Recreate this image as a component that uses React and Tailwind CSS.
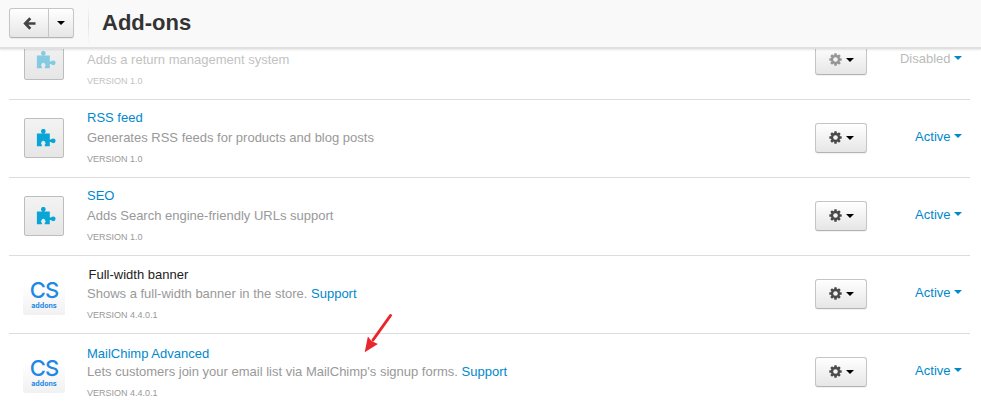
const BTN =
  'flex items-center justify-center border border-[#c5c5c5] border-b-[#b3b3b3] bg-linear-to-b from-white to-[#e6e6e6] shadow-[0_1px_1px_rgba(0,0,0,0.06)]';

function Caret({ className }) {
  return (
    <svg className={className} width="8" height="4" viewBox="0 0 8 4">
      <path d="M0 0h8L4 4z" fill="currentColor" />
    </svg>
  );
}

function Gear() {
  return (
    <svg className="-mt-px block" width="13" height="13" viewBox="-6.5 -6.5 13 13" fill="#4a4a4a">
      {[0, 45, 90, 135].map((a) => (
        <rect key={a} x="-1.3" y="-6.2" width="2.6" height="12.4" rx="0.4" transform={`rotate(${a})`} />
      ))}
      <circle r="4.7" />
      <circle r="2.3" fill="#f4f4f4" />
    </svg>
  );
}

function Puzzle() {
  return (
    <div className="flex h-10 w-10 rounded-xs border border-[#bdbdbd] bg-linear-to-b from-[#f3f3f3] to-[#e6e6e6] pt-[10px] pl-[11px]">
      <svg width="20" height="18" viewBox="0 0 20 18" fill="#08a5d6">
        <circle cx="7.300" cy="2.200" r="2.300" />
        <path d="M6 3.500h2.600v1.300H6zM13 10.500h3v2.600h-3z" />
        <circle cx="17.200" cy="11.800" r="2.400" />
        <path d="M0.900 4.500h12.900v12.800H8.700V15.900a2.200 2.200 0 1 0-2.800 0v1.400H0.900z" />
      </svg>
    </div>
  );
}

function CsLogo() {
  return (
    <div className="-mt-px -ml-px flex h-[42px] w-[42px] flex-col items-center rounded-xs bg-linear-to-b from-white from-30% to-[#f1f1f1] text-[#1e88e5]">
      <div className="mt-[7px] h-[20px] font-['Inter',sans-serif] text-[22px] leading-[20px] font-medium tracking-[-1px]">CS</div>
      <div className="mt-[2px] h-[8px] font-['Inter',sans-serif] text-[7px] leading-[8px] font-bold">addons</div>
    </div>
  );
}

const ADDONS = [
  { text: 'Adds a return management system', version: '1.0', disabled: true, title: 'h-[28px]' },
  { name: 'RSS feed', text: 'Generates RSS feeds for products and blog posts', version: '1.0', title: 'pt-[8px] h-[28px] text-[#0088cc]' },
  { name: 'SEO', text: 'Adds Search engine-friendly URLs support', version: '1.0', title: 'pt-[8px] h-[28px] text-[#0088cc]' },
  { name: 'Full-width banner', text: 'Shows a full-width banner in the store.', version: '4.4.0.1', cs: true, title: 'pt-[9px] h-[28px] pl-[1.5px] text-[#222]' },
  { name: 'MailChimp Advanced', text: "Lets customers join your email list via MailChimp's signup forms.", version: '4.4.0.1', cs: true, title: 'pt-[10px] h-[28px] text-[#0088cc]' },
];

function Row({ addon }) {
  return (
    <li className="flex h-[78px] shrink-0 border-b border-[#ddd]">
      <div className={`ml-[15px] w-[63px] pt-[18px] ${addon.disabled ? '[&_svg]:opacity-45' : ''}`}>
        {addon.cs ? <CsLogo /> : <Puzzle />}
      </div>
      <div className={`flex-1 ${addon.disabled ? 'opacity-60' : ''}`}>
        <div className={`leading-5 ${addon.title}`}>{addon.name}</div>
        <div className="leading-5 text-[#999]">
          {addon.text}
          {addon.cs && <span className="text-[#0088cc]"> Support</span>}
        </div>
        <div className="mt-px text-[9px] leading-5 text-[#999]">VERSION {addon.version}</div>
      </div>
      <div className="w-[62px] pt-[23px]">
        <div className={`${BTN} h-[30px] w-[52px] gap-1 rounded-[3px]`}>
          <span className={addon.disabled ? 'opacity-55' : ''}>
            <Gear />
          </span>
          <Caret className="text-black" />
        </div>
      </div>
      <div className="flex w-[93px] justify-end gap-[3.5px] pt-[27px] pr-2 leading-5 text-[#0088cc]">
        <span className={addon.disabled ? 'text-[#bbb]' : ''}>{addon.disabled ? 'Disabled' : 'Active'}</span>
        <Caret className="mt-[7px]" />
      </div>
    </li>
  );
}

export default function App() {
  return (
    <div className="relative flex h-[409px] w-[981px] flex-col overflow-hidden bg-white font-['Liberation_Sans',Arial,sans-serif] text-[13px]">
      <header className="z-10 flex h-[47px] shrink-0 items-start bg-[#f9f9f9] pt-2 pl-[9px] shadow-[0_2px_0_#e0e0e0,0_3px_2px_rgba(0,0,0,0.1)]">
        <div className={`${BTN} h-[30px] w-10 rounded-l-[3px]`}>
          <svg width="13" height="13" viewBox="0 0 13 13" fill="none" stroke="#444" strokeWidth="2.7">
            <path d="M7.300 1.200 2.200 6.500l5.100 5.300M2.500 6.500h10" />
          </svg>
        </div>
        <div className={`${BTN} -ml-px h-[30px] w-[26px] rounded-r-[3px]`}>
          <Caret className="text-black" />
        </div>
        <div className="-mt-1 ml-[14px] h-10 w-px bg-linear-to-b from-transparent via-[#e2e2e2] to-transparent" />
        <h1 className="ml-[13px] text-[22px] leading-[30px] font-bold text-[#333]">Add-ons</h1>
      </header>
      <main className="min-h-0 flex-1 overflow-hidden pr-[11px] pl-[9px]">
        <ul className="-mt-[25px] flex flex-col">
          {ADDONS.map((a) => (
            <Row key={a.text} addon={a} />
          ))}
        </ul>
      </main>
      <svg className="absolute top-[312px] left-[362px]" width="32" height="42" viewBox="0 0 32 42">
        <path d="M28.500 3.500 11 28" stroke="#e8262c" strokeWidth="3" strokeLinecap="round" />
        <path d="M2.700 40.300 5.900 24.500l3.600 4.500 6.400 3z" fill="#e8262c" />
      </svg>
    </div>
  );
}
